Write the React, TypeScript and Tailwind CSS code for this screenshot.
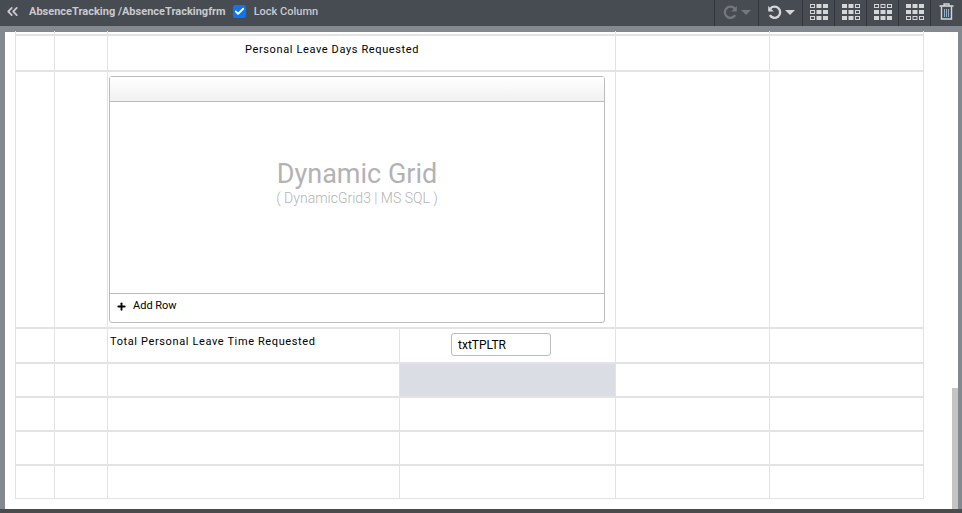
import React from "react";
import { Check, ChevronsLeft, Plus } from "lucide-react";

const ROBOTO = "[font-family:Roboto,sans-serif]";

// listed cells are outlined, the rest solid
function GridIcon({ outlined }: { outlined: number[] }) {
  const cells = [];
  for (let r = 0; r < 3; r++) {
    for (let c = 0; c < 3; c++) {
      const isOutlined = outlined.includes(r * 3 + c);
      cells.push(
        <rect
          key={r * 3 + c}
          x={c * 6.5 + (isOutlined ? 0.5 : 0)}
          y={r * 6 + (isOutlined ? 0.5 : 0)}
          width={isOutlined ? 4 : 5}
          height={isOutlined ? 3 : 4}
          fill={isOutlined ? "none" : "#d5d6d8"}
          stroke={isOutlined ? "#d5d6d8" : "none"}
        />
      );
    }
  }
  return (
    <svg width="18" height="16" viewBox="0 0 18 16">
      {cells}
    </svg>
  );
}

function Row({ h, cells }: { h: string; cells: React.ReactNode }) {
  return (
    <div className={`flex border-y border-[#e3e3e3] ${h}`}>
      <div className="w-[40px] shrink-0 border-x border-[#e3e3e3]" />
      <div className="w-[53px] shrink-0 border-r border-[#e3e3e3]" />
      {cells}
      <div className="w-[154px] shrink-0 border-r border-[#e3e3e3]" />
      <div className="w-[154px] shrink-0 border-r border-[#e3e3e3]" />
    </div>
  );
}

function SplitCells({
  left,
  right,
  grey,
}: {
  left?: React.ReactNode;
  right?: React.ReactNode;
  grey?: boolean;
}) {
  return (
    <>
      <div className="w-[292px] shrink-0 border-r border-[#e3e3e3]">{left}</div>
      <div className={`w-[216px] shrink-0 border-r border-[#e3e3e3] ${grey ? "bg-[#dadde4]" : ""}`}>
        {right}
      </div>
    </>
  );
}

export default function App() {
  return (
    <div className={`relative h-[513px] w-[962px] overflow-hidden bg-[#84888f] ${ROBOTO}`}>
      {/* toolbar */}
      <div className="flex h-[26px] items-center bg-[#474b52] pb-[3px]">
        <ChevronsLeft size={17} strokeWidth={2.5} className="ml-[4px] text-[#c9cacd]" />
        <span className="relative top-[1px] ml-[8px] text-[11px] font-bold text-[#c9cacd]">
          AbsenceTracking /AbsenceTrackingfrm
        </span>
        <span className="ml-[7px] flex h-[13px] w-[13px] items-center justify-center rounded-[2px] bg-[#0b76ef]">
          <Check size={11} strokeWidth={4} className="text-white" />
        </span>
        <span className="relative top-[1px] ml-[8px] text-[11px] font-medium text-[#c9cacd]">Lock Column</span>

        <div className="absolute right-0 top-0 flex h-[26px] items-center">
          <div className="flex h-full w-[44px] items-center justify-center gap-[3px] border-l border-[#33363b] pb-[2px]">
            <svg width="15" height="15" viewBox="0 0 15 15" fill="none" stroke="#74777c" strokeWidth="2.4">
              <path d="M12.2 10.2A5.6 5.6 0 1 1 11.6 3.5" />
              <path d="M13.8 1v5.6H8.2z" fill="#74777c" stroke="none" />
            </svg>
            <span className="h-0 w-0 border-x-[5px] border-t-[5px] border-x-transparent border-t-[#74777c]" />
          </div>
          <div className="flex h-full w-[44px] items-center justify-center gap-[3px] border-l border-[#33363b] pb-[2px]">
            <svg width="15" height="15" viewBox="0 0 15 15" fill="none" stroke="#d5d6d8" strokeWidth="2.4">
              <path d="M2.8 10.2A5.6 5.6 0 1 0 3.4 3.5" />
              <path d="M1.2 1v5.6h5.6z" fill="#d5d6d8" stroke="none" />
            </svg>
            <span className="h-0 w-0 border-x-[5px] border-t-[5px] border-x-transparent border-t-[#d5d6d8]" />
          </div>
          <div className="flex h-full w-[32px] items-center justify-center border-l border-[#33363b] pb-[3px]">
            <GridIcon outlined={[0, 3, 6]} />
          </div>
          <div className="flex h-full w-[32px] items-center justify-center border-l border-[#33363b] pb-[3px]">
            <GridIcon outlined={[2, 5, 8]} />
          </div>
          <div className="flex h-full w-[32px] items-center justify-center border-l border-[#33363b] pb-[3px]">
            <GridIcon outlined={[0, 1, 2]} />
          </div>
          <div className="flex h-full w-[32px] items-center justify-center border-l border-[#33363b] pb-[3px]">
            <GridIcon outlined={[6, 7, 8]} />
          </div>
          <div className="flex h-full w-[32px] items-center justify-center border-l border-[#33363b] pb-[3px]">
            <svg width="15" height="17" viewBox="0 0 15 17" fill="none">
              <path d="M0.5 3h14" stroke="#d5d6d8" strokeWidth="1.6" />
              <path d="M5 3V1h5v2" stroke="#d5d6d8" strokeWidth="1.3" />
              <path d="M2.5 3.5v12.5h10V3.5" stroke="#d5d6d8" strokeWidth="1.4" />
              <path d="M5.5 6v8M7.5 6v8M9.5 6v8" stroke="#8fb0c8" strokeWidth="1" />
            </svg>
          </div>
        </div>
      </div>

      {/* form panel */}
      <div className="absolute left-[5px] top-[32px] h-[477px] w-[953px] bg-white">
        <div className="absolute left-[10px] top-[-1px] w-[909px] text-[11px] tracking-[0.62px] text-black">
          <div className="h-[4px] border-b border-[#e3e3e3]">
            <div className="flex h-full">
              <div className="w-[40px] border-x border-[#e3e3e3]" />
              <div className="w-[53px] border-r border-[#e3e3e3]" />
              <div className="w-[508px] border-r border-[#e3e3e3]" />
              <div className="w-[154px] border-r border-[#e3e3e3]" />
              <div className="w-[154px] border-r border-[#e3e3e3]" />
            </div>
          </div>
          <Row
            h="h-[36px]"
            cells={
              <div className="w-[508px] shrink-0 border-r border-[#e3e3e3] pl-[137px] pt-[6px] leading-[16px]">
                Personal Leave Days Requested
              </div>
            }
          />
          <Row
            h="h-[257px]"
            cells={
              <div className="w-[508px] shrink-0 border-r border-[#e3e3e3] pl-[1px] pt-[4px]">
                <div className="flex h-[247px] w-[496px] flex-col rounded-[3px] border border-[#bbbbbb] tracking-normal">
                  <div className="h-[25px] border-b border-[#bbbbbb] bg-gradient-to-b from-white to-[#f1f1f1]" />
                  <div className="flex flex-1 flex-col items-center pt-[57px] text-[#b3b3b3]">
                    <div className="text-[27px] leading-[30px]">Dynamic Grid</div>
                    <div className="mt-[1px] text-[14px] font-light leading-[17px]">( DynamicGrid3 | MS SQL )</div>
                  </div>
                  <div className="flex h-[29px] items-center border-t border-[#bbbbbb] pb-[4px] pl-[6px] text-[11px]">
                    <Plus size={11} strokeWidth={4} className="text-black" />
                    <span className="ml-[6px]">Add Row</span>
                  </div>
                </div>
              </div>
            }
          />
          <Row
            h="h-[35px]"
            cells={
              <SplitCells
                left={<div className="pl-[2px] pt-[5px] leading-[16px]">Total Personal Leave Time Requested</div>}
                right={
                  <div className="pl-[51px] pt-[4px]">
                    <div className="flex h-[23px] w-[100px] items-center rounded-[3px] border border-[#bbbbbb] pl-[6px] pt-[1px] text-[12px] tracking-normal">
                      txtTPLTR
                    </div>
                  </div>
                }
              />
            }
          />
          <Row h="h-[34px]" cells={<SplitCells grey />} />
          <Row h="h-[34px]" cells={<SplitCells />} />
          <Row h="h-[34px]" cells={<SplitCells />} />
          <Row h="h-[34px]" cells={<SplitCells />} />
        </div>
        {/* scrollbar */}
        <div className="absolute left-[947px] top-[356px] h-[121px] w-[6px] bg-[#c4c4c4]" />
      </div>

      {/* bottom bar */}
      <div className="absolute bottom-0 left-0 h-[4px] w-full bg-[#4a4b4d]" />
    </div>
  );
}
